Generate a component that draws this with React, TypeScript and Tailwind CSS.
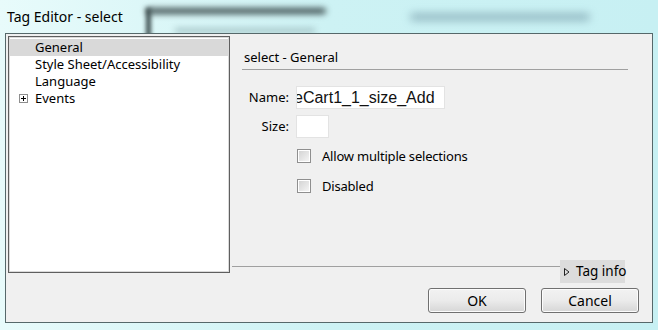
import React from "react";

const UI = { fontFamily: '"Noto Sans", "Open Sans", sans-serif' };

function Checkbox() {
  return (
    <span className="flex h-[14px] w-[14px] items-center justify-center border border-[#8f8f8f] bg-white">
      <span className="h-[10px] w-[10px] bg-gradient-to-br from-[#d4d4d4] to-[#f4f4f4]" />
    </span>
  );
}

function WinButton({ label }: { label: string }) {
  return (
    <button
      type="button"
      className="flex h-[25px] w-[98px] items-center justify-center rounded-[3px] border border-[#707070] bg-gradient-to-b from-[#f2f2f2] via-[#ebebeb] to-[#d6d6d6] text-[14px] text-black shadow-[inset_0_0_0_1px_#fcfcfc]"
    >
      {label}
    </button>
  );
}

export default function App() {
  const tree = ["General", "Style Sheet/Accessibility", "Language", "Events"];

  return (
    <div
      className="relative h-[330px] w-[658px] overflow-hidden bg-gradient-to-r from-[#e8fbfb] via-[#cdf2f4] to-[#c7f0f3] text-black"
      style={UI}
    >
      {/* blurred aero glass backdrop */}
      <div className="absolute left-[146px] top-[8px] h-[6px] w-[180px] rounded bg-[#3e4f50] blur-[3px]" />
      <div className="absolute left-[146px] top-[8px] h-[30px] w-[5px] bg-[#3e4f50] blur-[2px]" />
      <div className="absolute left-[410px] top-[13px] h-[8px] w-[180px] rounded bg-[#7fa4b0] opacity-70 blur-[4px]" />
      <div className="absolute left-[175px] top-[28px] h-[5px] w-[140px] bg-[#a6c6c8] blur-[3px]" />

      <div className="relative flex h-[33px] items-center pl-[7px] text-[14px]">Tag Editor - select</div>

      <div className="relative mx-[5px] flex h-[290px] flex-col border border-[#56686a] bg-[#f0f0f0]">
        <div className="flex">
          {/* tree list */}
          <div className="ml-[2px] mt-[2px] h-[237px] w-[222px] border border-[#5f5f5f] bg-white px-px pt-[2px] shadow-[inset_0_0_0_1px_#dadada]">
            {tree.map((item, i) => (
              <div
                key={item}
                className={`flex h-[17px] items-center text-[13px] leading-[17px] ${i === 0 ? "bg-[#d9d9d9]" : ""}`}
              >
                <span className="flex w-[25px] justify-center pl-[2px]">
                  {item === "Events" && (
                    <span className="relative h-[9px] w-[9px] border border-[#8e8e8e] bg-white">
                      <span className="absolute left-[1px] top-[3px] h-[1px] w-[5px] bg-black" />
                      <span className="absolute left-[3px] top-[1px] h-[5px] w-[1px] bg-black" />
                    </span>
                  )}
                </span>
                {item}
              </div>
            ))}
          </div>

          {/* right pane */}
          <div className="ml-[2px] flex w-[405px] flex-col">
            <div className="ml-[10px] mr-[9px] mt-[14px] border-b border-[#a0a0a0] pb-[3px] pl-[2px] text-[13px] leading-[18px]">
              select - General
            </div>

            <div className="ml-[10px] mt-[16px] flex flex-col gap-[6px]">
              <div className="flex items-center">
                <span className="w-[47px] text-right text-[13px]">Name:</span>
                <div
                  className="ml-[7px] h-[23px] w-[149px] overflow-hidden whitespace-nowrap border border-[#e3e3e3] bg-white pl-[1px] text-[16px] leading-[21px] text-[#111]"
                  style={{ fontFamily: '"Liberation Sans", Arial, sans-serif' }}
                >
                  <span className="-ml-[4px]">eCart1_1_size_Add</span>
                </div>
              </div>
              <div className="flex items-center">
                <span className="w-[47px] text-right text-[13px]">Size:</span>
                <div className="ml-[7px] h-[23px] w-[33px] border border-[#e3e3e3] bg-white" />
              </div>
            </div>

            <div className="ml-[65px] mt-[11px] flex flex-col gap-[16px]">
              <label className="flex items-center gap-[11px] text-[13px] leading-[14px] tracking-[-0.2px]">
                <Checkbox />
                Allow multiple selections
              </label>
              <label className="flex items-center gap-[11px] text-[13px] leading-[14px] tracking-[-0.2px]">
                <Checkbox />
                Disabled
              </label>
            </div>

            <div className="mt-auto flex items-center pr-[12px]">
              <div className="h-px flex-1 bg-[#a0a0a0]" />
              <div className="mb-[-10px] flex h-[23px] w-[65px] shrink-0 items-center gap-[5px] whitespace-nowrap bg-[#dcdcdc] pl-[3px] text-[13.5px]">
                <svg width="8" height="10" viewBox="0 0 8 10" className="shrink-0">
                  <path d="M1.5 1.5 L6 5 L1.5 8.5 Z" fill="none" stroke="#222" strokeWidth="1" />
                </svg>
                Tag info
              </div>
            </div>
          </div>
        </div>

        <div className="mt-[15px] flex justify-end gap-[15px] pr-[13px]">
          <WinButton label="OK" />
          <WinButton label="Cancel" />
        </div>
      </div>
    </div>
  );
}
